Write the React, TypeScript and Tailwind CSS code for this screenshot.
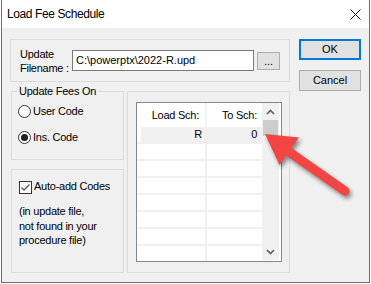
import React from "react";

const Chevron = ({ down }: { down?: boolean }) => (
  <svg width="9" height="6" viewBox="0 0 9 6">
    <polyline
      points={down ? "1,1 4.5,4.5 8,1" : "1,5 4.5,1.5 8,5"}
      fill="none"
      stroke="#606060"
      strokeWidth="1.6"
    />
  </svg>
);

const Radio = ({ checked, label }: { checked?: boolean; label: string }) => (
  <div className="flex items-center h-[13px]">
    <div className="w-[13px] h-[13px] rounded-full border border-[#333333] bg-white flex items-center justify-center">
      {checked && <div className="w-[7px] h-[7px] rounded-full bg-[#1f1f1f]" />}
    </div>
    <span className="ml-[2px]">{label}</span>
  </div>
);

const rows = [
  { load: "R", to: "0" },
  { load: "", to: "" },
  { load: "", to: "" },
  { load: "", to: "" },
  { load: "", to: "" },
  { load: "", to: "" },
  { load: "", to: "" },
  { load: "", to: "" },
];

export default function App() {
  return (
    <div className="relative w-[371px] h-[284px] bg-white px-px pb-px font-['Liberation_Sans',Arial,sans-serif] text-[11px] tracking-[-0.25px] text-black leading-[13px]">
      <div className="h-full border-x border-b border-[#6f6f6f] flex flex-col">
        {/* title bar */}
        <div className="h-[28px] shrink-0 bg-white flex items-center pl-[5px] pr-[8px]">
          <span className="text-[12px] tracking-[-0.4px]">Load Fee Schedule</span>
          <svg className="ml-auto" width="11" height="11" viewBox="0 0 11 11">
            <path d="M0.5 0.5 L10.5 10.5 M10.5 0.5 L0.5 10.5" stroke="#111" strokeWidth="1" />
          </svg>
        </div>

        {/* client area */}
        <div className="flex-1 bg-[#f0f0f0] flex pt-[11px] pl-[8px] pr-[8px]">
          <div className="w-[280px] flex flex-col">
            {/* filename group */}
            <div className="h-[43px] border border-[#dcdcdc] flex items-center pl-[9px]">
              <div className="w-[52px] leading-[14px]">
                <div>Update</div>
                <div>Filename :</div>
              </div>
              <div className="w-[182px] h-[21px] border border-[#7a7a7a] bg-white flex items-center pl-[3px] tracking-normal">
                C:\powerptx\2022-R.upd
              </div>
              <div className="ml-[3px] w-[23px] h-[18px] mt-px border border-[#adadad] bg-[#e1e1e1] flex items-center justify-center tracking-normal">
                ...
              </div>
            </div>

            <div className="mt-[9px] flex">
              {/* left stack */}
              <div className="ml-px w-[113px] flex flex-col">
                <div className="relative h-[69px] border border-[#dcdcdc] pl-[6px] pt-[13px]">
                  <span className="absolute left-[5px] top-[-7px] px-[2px] bg-[#f0f0f0]">Update Fees On</span>
                  <Radio label="User Code" />
                  <div className="mt-[13px]">
                    <Radio checked label="Ins. Code" />
                  </div>
                </div>

                <div className="mt-[9px] h-[104px] border border-[#dcdcdc] pl-[7px] pt-[11px]">
                  <div className="flex items-center h-[13px]">
                    <div className="w-[13px] h-[13px] border border-[#333333] bg-white flex items-center justify-center">
                      <svg width="11" height="11" viewBox="0 0 11 11">
                        <polyline points="1.5,5.5 4,8 9.5,2.5" fill="none" stroke="#5a5a5a" strokeWidth="1.3" />
                      </svg>
                    </div>
                    <span className="ml-[2px] -mt-[2px]">Auto-add Codes</span>
                  </div>
                  <div className="mt-[10px] leading-[14.5px]">
                    <div>(in update file,</div>
                    <div>not found in your</div>
                    <div>procedure file)</div>
                  </div>
                </div>
              </div>

              {/* schedule group */}
              <div className="ml-[3px] w-[163px] h-[182px] border border-[#dcdcdc] pl-[8px] pt-[10px]">
                <div className="w-[146px] h-[160px] border border-[#828790] bg-white flex overflow-hidden">
                  <div className="w-[125px] flex flex-col">
                    <div className="h-[24px] shrink-0 flex items-center">
                      <div className="w-[68px] text-right pr-[6px]">Load Sch:</div>
                      <div className="flex-1 h-full border-l-2 border-[#f3f3f3] flex items-center justify-end pr-[5px]">
                        To Sch:
                      </div>
                    </div>
                    {rows.map((r, i) =>
                      i === 0 ? (
                        <div key={i} className="h-[17px] shrink-0 flex border-b-2 border-[#f0f0f0]">
                          <div className="ml-[4px] w-[64px] bg-[#f0f0f0] flex items-center justify-end pr-[3px]">{r.load}</div>
                          <div className="flex-1 bg-[#f0f0f0] flex items-center justify-end pr-[5px]">{r.to}</div>
                        </div>
                      ) : (
                        <div key={i} className="h-[17px] shrink-0 flex border-b-2 border-[#f0f0f0]">
                          <div className="w-[68px]" />
                          <div className="flex-1 border-l-2 border-[#f0f0f0]" />
                        </div>
                      )
                    )}
                  </div>
                  {/* scrollbar */}
                  <div className="w-[17px] h-[157px] bg-[#f0f0f0] flex flex-col items-center">
                    <div className="h-[17px] flex items-center justify-center">
                      <Chevron />
                    </div>
                    <div className="w-[15px] h-[16px] bg-[#cdcdcd]" />
                    <div className="mt-auto h-[17px] flex items-center justify-center">
                      <Chevron down />
                    </div>
                  </div>
                </div>
              </div>
            </div>
          </div>

          {/* buttons */}
          <div className="ml-[9px] w-[62px] flex flex-col gap-[10px] tracking-normal">
            <div className="h-[21px] border-2 border-[#0078d7] bg-[#e1e1e1] flex items-center justify-center">OK</div>
            <div className="h-[21px] border border-[#adadad] bg-[#e1e1e1] flex items-center justify-center">Cancel</div>
          </div>
        </div>
      </div>

      {/* red callout arrow */}
      <svg className="absolute inset-0 pointer-events-none drop-shadow-[2px_3px_2px_rgba(0,0,0,0.45)]" width="371" height="284" viewBox="0 0 371 284">
        <line x1="285" y1="149" x2="345" y2="191" stroke="#f44545" strokeWidth="9" strokeLinecap="round" />
        <polygon points="265,134 299,137.5 279.5,165" fill="#f44545" />
      </svg>
    </div>
  );
}
